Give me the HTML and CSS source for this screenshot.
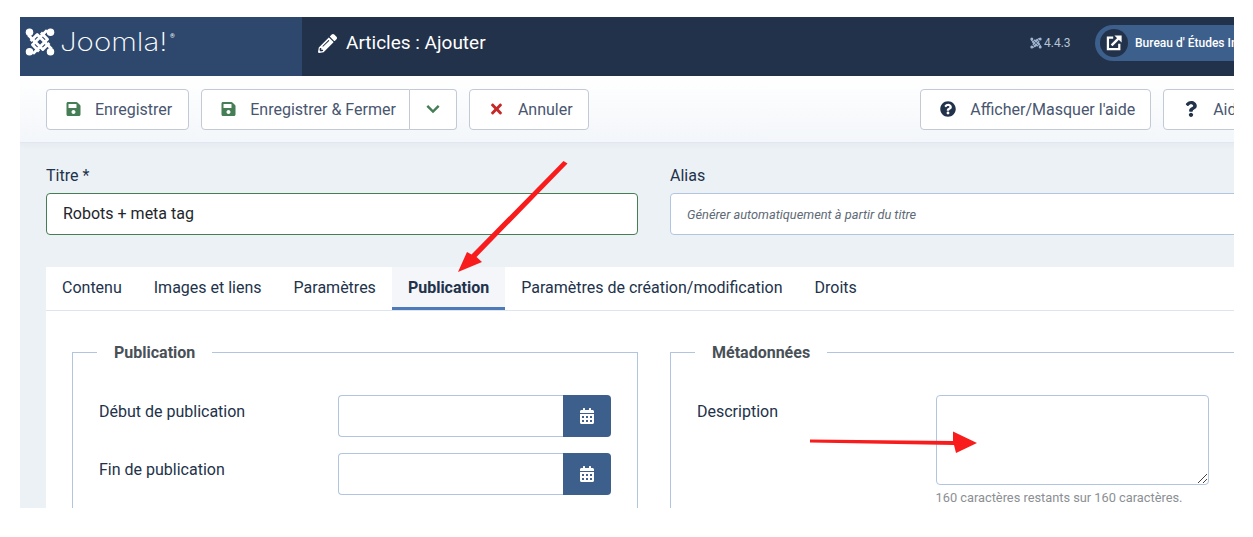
FILE: index.html
```html
<!DOCTYPE html>
<html lang="fr">
<head>
<meta charset="utf-8">
<title>Articles : Ajouter</title>
<link rel="stylesheet" href="styles.css">
</head>
<body>
<svg class="defs" width="0" height="0" aria-hidden="true">
  <symbol id="i-save" viewBox="0 0 448 512"><path fill="currentColor" d="M433.941 129.941l-83.882-83.882A48 48 0 0 0 316.118 32H48C21.49 32 0 53.49 0 80v352c0 26.51 21.49 48 48 48h352c26.51 0 48-21.49 48-48V163.882a48 48 0 0 0-14.059-33.941zM224 416c-35.346 0-64-28.654-64-64 0-35.346 28.654-64 64-64s64 28.654 64 64c0 35.346-28.654 64-64 64zm96-304.52V212c0 6.627-5.373 12-12 12H76c-6.627 0-12-5.373-12-12V108c0-6.627 5.373-12 12-12h228.52c3.183 0 6.235 1.264 8.485 3.515l3.48 3.48A11.996 11.996 0 0 1 320 111.48z"/></symbol>
  <symbol id="i-cal" viewBox="0 0 448 512"><path fill="currentColor" d="M0 464c0 26.5 21.5 48 48 48h352c26.5 0 48-21.5 48-48V192H0v272zm320-196c0-6.6 5.4-12 12-12h40c6.6 0 12 5.4 12 12v40c0 6.6-5.4 12-12 12h-40c-6.6 0-12-5.4-12-12v-40zm0 128c0-6.6 5.4-12 12-12h40c6.6 0 12 5.4 12 12v40c0 6.6-5.4 12-12 12h-40c-6.6 0-12-5.4-12-12v-40zM192 268c0-6.6 5.4-12 12-12h40c6.6 0 12 5.4 12 12v40c0 6.6-5.4 12-12 12h-40c-6.6 0-12-5.4-12-12v-40zm0 128c0-6.6 5.4-12 12-12h40c6.6 0 12 5.4 12 12v40c0 6.6-5.4 12-12 12h-40c-6.6 0-12-5.4-12-12v-40zM64 268c0-6.6 5.4-12 12-12h40c6.6 0 12 5.4 12 12v40c0 6.6-5.4 12-12 12H76c-6.6 0-12-5.4-12-12v-40zm0 128c0-6.6 5.4-12 12-12h40c6.6 0 12 5.4 12 12v40c0 6.6-5.4 12-12 12H76c-6.6 0-12-5.4-12-12v-40zM400 64h-48V16c0-8.8-7.2-16-16-16h-32c-8.8 0-16 7.2-16 16v48H160V16c0-8.8-7.2-16-16-16h-32c-8.8 0-16 7.2-16 16v48H48C21.5 64 0 85.5 0 112v48h448v-48c0-26.5-21.5-48-48-48z"/></symbol>
  <symbol id="i-joomla" viewBox="0 0 32 32">
    <g fill="none" stroke="currentColor" stroke-width="3.100" stroke-linejoin="round">
      <path d="M3.500 8.500L19 24L26 17"/>
      <path d="M23.500 3.500L8 19L15 26"/>
      <path d="M28.500 23.500L13 8L6 15"/>
      <path d="M8.500 28.500L24 13L17 6"/>
    </g>
    <g fill="currentColor">
      <circle cx="4.800" cy="5.500" r="4"/><circle cx="27.200" cy="5.500" r="4"/>
      <circle cx="4.800" cy="26.500" r="4"/><circle cx="27.200" cy="26.500" r="4"/>
    </g>
  </symbol>
</svg>

<div class="frame">
  <div class="sheet">
    <header class="topbar">
      <div class="brand">
        <svg class="brand-mark"><use href="#i-joomla"/></svg>
        <span class="brand-name">Joomla!</span><sup class="brand-reg">®</sup>
      </div>
      <div class="page-title">
        <svg class="title-icon" viewBox="0 0 512 512"><path fill="currentColor" d="M497.9 142.1l-46.1 46.1c-4.7 4.7-12.3 4.7-17 0l-111-111c-4.7-4.7-4.7-12.3 0-17l46.1-46.1c18.7-18.7 49.1-18.7 67.9 0l60.1 60.1c18.8 18.7 18.8 49.1 0 67.9zM284.2 99.8L21.6 362.4.4 483.9c-2.9 16.4 11.4 30.6 27.8 27.8l121.5-21.3 262.6-262.6c4.7-4.7 4.7-12.3 0-17l-111-111c-4.8-4.7-12.4-4.7-17.1 0zM124.1 339.9c-5.5-5.5-5.5-14.3 0-19.8l154-154c5.5-5.5 14.3-5.5 19.8 0s5.5 14.3 0 19.8l-154 154c-5.5 5.5-14.3 5.5-19.8 0zM88 424h48v36.3l-64.5 11.3-31.1-31.1L51.7 376H88v48z"/></svg>
        <h1>Articles : Ajouter</h1>
      </div>
      <div class="version"><svg class="version-mark"><use href="#i-joomla"/></svg>4.4.3</div>
      <div class="site-pill">
        <span class="site-disc">
          <svg class="site-icon" viewBox="0 0 20 20"><path fill="none" stroke="currentColor" stroke-width="2.800" d="M9 3.400H2.400v14.200h14.200V11"/><path fill="none" stroke="currentColor" stroke-width="3" d="M7 13L16 4"/><path fill="currentColor" d="M10.500 0.500h9v9z"/></svg>
        </span>
        <span class="site-name">Bureau d' Études Industriels</span>
      </div>
    </header>

    <nav class="toolbar">
      <button class="btn btn-save"><svg class="ico ico-save"><use href="#i-save"/></svg>Enregistrer</button>
      <div class="btn-group">
        <button class="btn btn-main"><svg class="ico ico-save"><use href="#i-save"/></svg>Enregistrer &amp; Fermer</button>
        <button class="btn btn-caret"><svg class="caret" viewBox="0 0 16 10"><path fill="none" stroke="currentColor" stroke-width="2.800" d="M1.500 1.500L8 8l6.500-6.500"/></svg></button>
      </div>
      <button class="btn"><svg class="ico ico-cancel" viewBox="0 0 352 512"><path fill="currentColor" d="M242.72 256l100.07-100.07c12.28-12.28 12.28-32.19 0-44.48l-22.24-22.24c-12.28-12.28-32.19-12.28-44.48 0L176 189.28 75.93 89.21c-12.28-12.28-32.19-12.28-44.48 0L9.21 111.45c-12.28 12.28-12.28 32.19 0 44.48L109.28 256 9.21 356.07c-12.28 12.28-12.28 32.19 0 44.48l22.24 22.24c12.28 12.28 32.2 12.28 44.48 0L176 322.72l100.07 100.07c12.28 12.28 32.2 12.28 44.48 0l22.24-22.24c12.28-12.28 12.28-32.19 0-44.48L242.72 256z"/></svg>Annuler</button>
      <button class="btn btn-push"><svg class="ico ico-dark" viewBox="0 0 512 512"><path fill="currentColor" d="M504 256c0 136.997-111.043 248-248 248S8 392.997 8 256C8 119.083 119.043 8 256 8s248 111.083 248 248zM262.655 90c-54.497 0-89.255 22.957-116.549 63.758-3.536 5.286-2.353 12.415 2.715 16.258l34.699 26.31c5.205 3.947 12.621 3.008 16.665-2.122 17.864-22.658 30.113-35.797 57.303-35.797 20.429 0 45.698 13.148 45.698 32.958 0 14.976-12.363 22.667-32.534 33.976C247.128 238.528 216 254.941 216 296v4c0 6.627 5.373 12 12 12h56c6.627 0 12-5.373 12-12v-1.333c0-28.462 83.186-29.647 83.186-106.667 0-58.002-60.165-102-116.531-102zM256 338c-25.365 0-46 20.635-46 46 0 25.364 20.635 46 46 46s46-20.636 46-46c0-25.365-20.635-46-46-46z"/></svg>Afficher/Masquer l'aide</button>
      <button class="btn"><svg class="ico ico-dark" viewBox="0 0 384 512"><path fill="currentColor" d="M202.021 0C122.202 0 70.503 32.703 29.914 91.026c-7.363 10.58-5.093 25.086 5.178 32.874l43.138 32.709c10.373 7.865 25.132 6.026 33.253-4.148 25.049-31.381 43.63-49.449 82.757-49.449 30.764 0 68.816 19.799 68.816 49.631 0 22.552-18.617 34.134-48.993 51.164-35.423 19.86-82.299 44.576-82.299 106.405V320c0 13.255 10.745 24 24 24h72.471c13.255 0 24-10.745 24-24v-5.773c0-42.86 125.268-44.645 125.268-160.627C377.504 66.256 286.902 0 202.021 0zM192 373.459c-38.196 0-69.271 31.075-69.271 69.271 0 38.195 31.075 69.27 69.271 69.27s69.271-31.075 69.271-69.271-31.075-69.27-69.271-69.27z"/></svg>Aide</button>
    </nav>

    <main class="content">
      <div class="title-row">
        <div class="field">
          <label class="field-label">Titre *</label>
          <div class="text-input is-valid">Robots + meta tag</div>
        </div>
        <div class="field">
          <label class="field-label">Alias</label>
          <div class="text-input placeholder">Générer automatiquement à partir du titre</div>
        </div>
      </div>

      <section class="card">
        <div class="tabs">
          <span class="tab">Contenu</span>
          <span class="tab">Images et liens</span>
          <span class="tab">Paramètres</span>
          <span class="tab active">Publication</span>
          <span class="tab">Paramètres de création/modification</span>
          <span class="tab">Droits</span>
        </div>
        <div class="panes">
          <fieldset class="group">
            <legend>Publication</legend>
            <div class="row">
              <label class="row-label">Début de publication</label>
              <div class="date-input"><span class="date-box"></span><span class="date-btn"><svg class="cal"><use href="#i-cal"/></svg></span></div>
            </div>
            <div class="row">
              <label class="row-label">Fin de publication</label>
              <div class="date-input"><span class="date-box"></span><span class="date-btn"><svg class="cal"><use href="#i-cal"/></svg></span></div>
            </div>
          </fieldset>
          <fieldset class="group">
            <legend>Métadonnées</legend>
            <div class="row">
              <label class="row-label">Description</label>
              <div class="desc">
                <div class="textarea">
                  <svg class="grip" viewBox="0 0 10 10"><path fill="none" stroke="#444" stroke-width="1" d="M1 10L10 1M6 10L10 6"/></svg>
                </div>
                <small class="help">160 caractères restants sur 160 caractères.</small>
              </div>
            </div>
          </fieldset>
        </div>
      </section>
    </main>
  </div>

  <svg class="annotations" viewBox="0 0 1214 491" aria-hidden="true">
    <path class="ink" d="M543.500 144L547.500 146.500L456.500 240L462 245L438 255L447 235L451.500 237.500Z"/>
    <path class="ink" d="M790 422.500L933 424L933 414.500L957 426L936 436L934 428L790 425.500Z"/>
  </svg>
</div>
</body>
</html>
```

FILE: styles.css
```css
* { box-sizing: border-box; }
html, body { margin: 0; padding: 0; background: #fff; }
body { font-family: Roboto, "Liberation Sans", sans-serif; font-size: 16px; color: #22262a; }
.defs { position: absolute; }

.frame { position: relative; width: 1214px; height: 491px; margin: 17px 0 0 20px; overflow: hidden; background: #ecf1f6; }
.sheet { width: 1300px; }

.topbar { display: flex; align-items: center; height: 59px; background: #22324a; color: #fff; }
.brand { display: flex; align-items: flex-start; width: 282px; height: 100%; background: #2e486d; padding: 10px 0 0 5px; flex: none; }
.brand-mark { width: 30px; height: 30px; color: #fff; flex: none; }
.brand-name { font-family: Inter, sans-serif; font-weight: 200; font-size: 25px; line-height: 30px; margin-left: 5px; width: 110px; transform: scaleX(1.180); transform-origin: left center; }
.brand-reg { font-size: 6px; line-height: 8px; margin: 5px 0 0 0; }
.page-title, .version, .site-pill { margin-bottom: 7px; }
.page-title { display: flex; align-items: center; width: 728px; padding-left: 16px; flex: none; }
.title-icon { width: 19px; height: 19px; margin-right: 9px; flex: none; }
h1 { margin: 0; font-size: 19px; font-weight: 400; line-height: 24px; }
.version { display: flex; align-items: center; font-size: 12px; color: #b5c4d8; width: 65px; flex: none; }
.version-mark { width: 12px; height: 12px; margin-right: 2px; color: #9fb4d0; }
.site-pill { display: flex; align-items: center; width: 220px; height: 36px; background: #3d5f8c; border-radius: 18px 0 0 18px; padding-left: 5px; flex: none; }
.site-disc { display: flex; align-items: center; justify-content: center; width: 28px; height: 28px; border-radius: 50%; background: #22324a; flex: none; }
.site-icon { width: 16px; height: 16px; color: #fff; }
.site-name { font-size: 12px; font-weight: 500; margin-left: 7px; white-space: nowrap; }

.toolbar { display: flex; align-items: center; gap: 12px; height: 67px; padding: 0 59px 0 26px; background: linear-gradient(#fff, #f3f6fa); border-bottom: 1px solid #e1e6ef; box-shadow: 0 2px 6px rgba(34, 50, 74, .04); }
.btn { display: inline-flex; align-items: center; height: 41px; padding: 0 15px 0 19px; background: #fff; border: 1px solid #c3c9d5; border-radius: 4px; font: 400 16px Roboto, sans-serif; color: #495670; white-space: nowrap; }
.btn-save { padding-right: 16px; }
.btn-push { margin-left: auto; }
.btn-group { display: flex; }
.btn-main { border-radius: 4px 0 0 4px; padding-right: 13px; }
.btn-caret { border-left: 0; border-radius: 0 4px 4px 0; padding: 0 16px; width: 47px; color: #457d54; }
.caret { width: 15px; height: 10px; }
.ico { width: 15px; height: 16px; margin-right: 14px; flex: none; }
.ico-save { color: #457d54; }
.ico-cancel { color: #c52827; }
.ico-dark { color: #22324a; width: 16px; }

.content { padding: 21px 72px 0 26px; }
.title-row { display: grid; grid-template-columns: 592px 592px; column-gap: 32px; }
.field-label { display: block; line-height: 24px; height: 29px; color: #22324a; }
.text-input { display: flex; align-items: center; height: 42px; padding: 0 16px; background: #fff; border: 1px solid #b2c5e0; border-radius: 4px; color: #22262a; }
.is-valid { border-color: #457d54; padding-bottom: 2px; }
.placeholder { font-size: 12.800px; font-style: italic; color: #5e6a75; padding-top: 1px; }

.card { margin-top: 32px; background: #fff; width: 1200px; }
.tabs { display: flex; height: 44px; border-bottom: 1px solid #dfe5ef; }
.tab { display: flex; align-items: center; height: 43px; padding: 0 16px 2px; color: #22324a; }
.tab.active { font-weight: 700; background: #f4f6fa; border-bottom: 3px solid #4f7ab8; padding: 1px 16px 0; }
.panes { display: grid; grid-template-columns: 566px 566px; column-gap: 32px; padding: 30px 26px 0; }
.group { margin: 0; min-width: 0; padding: 32px 26px 24px; border: 1px solid #b2c5e0; }
.group legend { margin-left: -2px; padding: 2px 17px 0; font-weight: 700; font-size: 16px; line-height: 20px; color: #495057; }
.row { display: grid; grid-template-columns: 238.500px 273px; margin-bottom: 16px; }
.row-label { padding-top: 5px; line-height: 24px; color: #22324a; }
.date-input { display: flex; height: 42px; }
.date-box { flex: 1; background: #fff; border: 1px solid #b2c5e0; border-right: 0; border-radius: 4px 0 0 4px; }
.date-btn { display: flex; align-items: center; justify-content: center; width: 48px; background: #3d5f8c; border-radius: 0 4px 4px 0; color: #fff; }
.cal { width: 14px; height: 16px; }
.textarea { position: relative; height: 90px; background: #fff; border: 1px solid #b2c5e0; border-radius: 4px; }
.grip { position: absolute; right: 1px; bottom: 1px; width: 10px; height: 10px; }
.help { display: block; margin-top: 5px; font-size: 12.800px; line-height: 16px; color: #8b8f94; white-space: nowrap; }

.annotations { position: absolute; left: 0; top: 0; width: 1214px; height: 491px; pointer-events: none; }
.ink { fill: #f81c1c; }
```
